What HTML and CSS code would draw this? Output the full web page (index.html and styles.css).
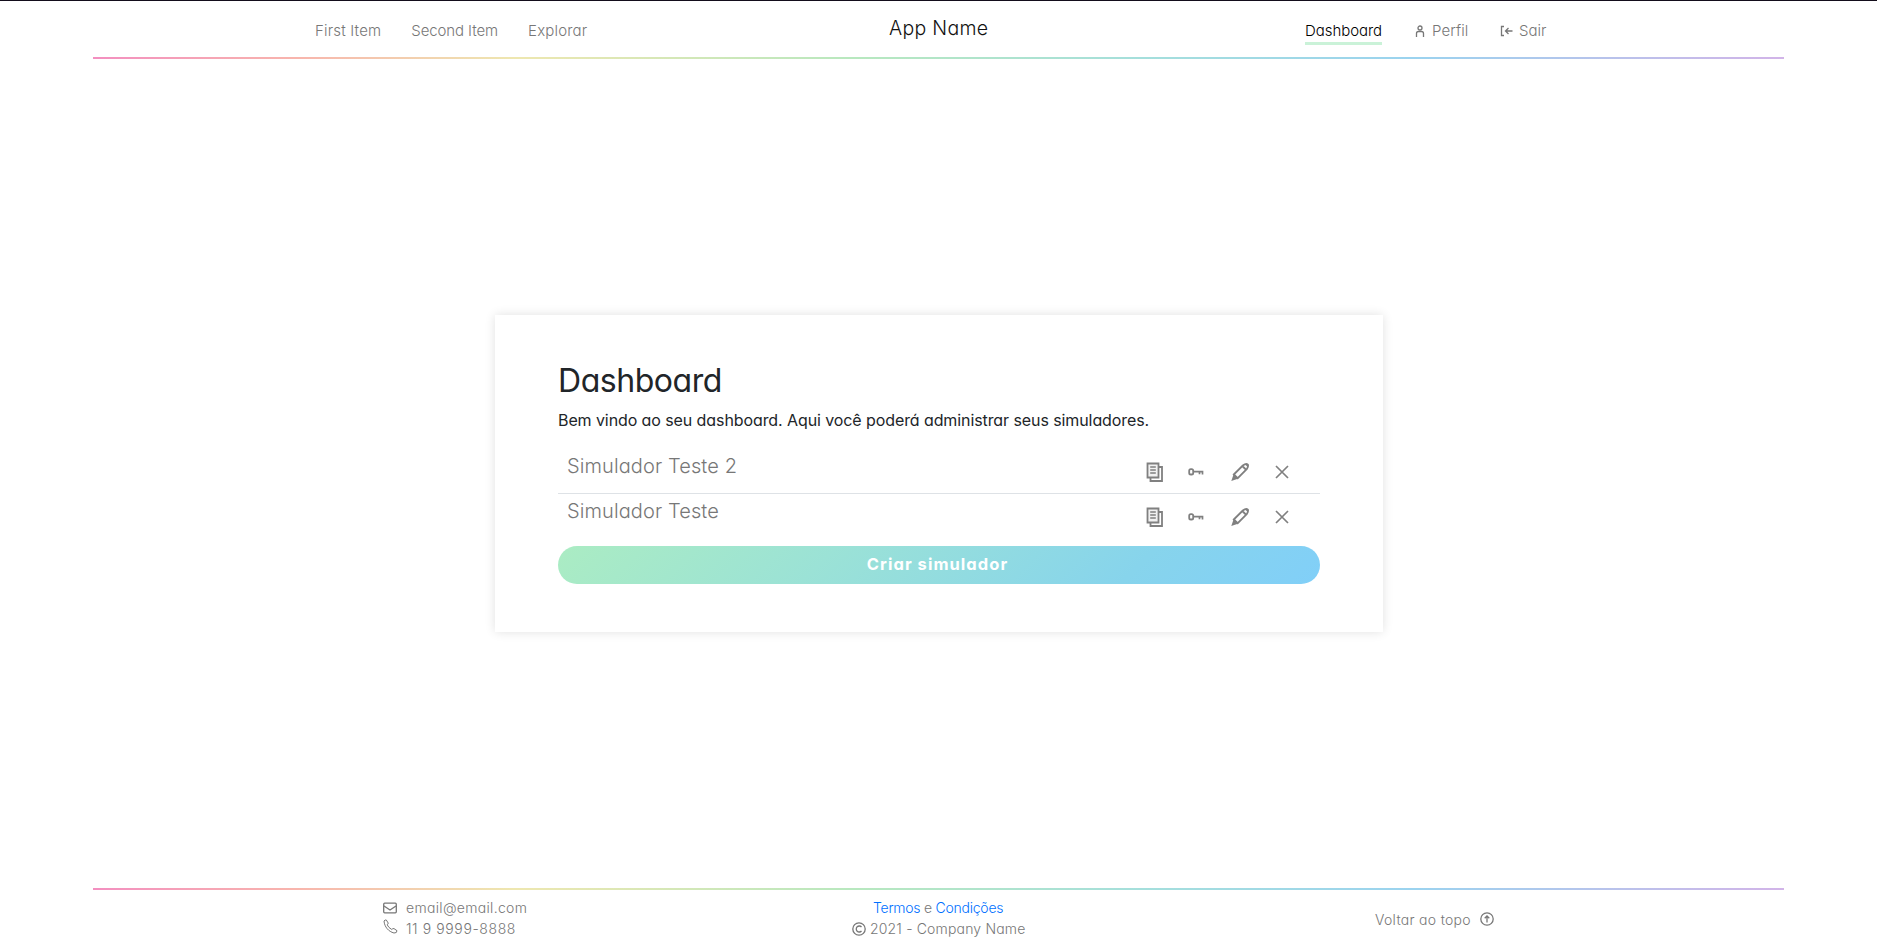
FILE: index.html
```html
<!DOCTYPE html>
<html lang="pt-BR">
<head>
<meta charset="utf-8">
<title>Dashboard</title>
<link rel="stylesheet" href="styles.css">
</head>
<body>
<svg class="sprite" aria-hidden="true">
  <symbol id="pages" viewBox="0 0 18 20"><path d="M4.500 16v3h11.500V5h-3" fill="none" stroke="currentColor" stroke-width="1.800"/><path d="M1.500 1.500h11v14h-11z" fill="#f1f1f1" stroke="currentColor" stroke-width="1.800"/><path d="M4.200 5h5.600M4.200 8h5.600M4.200 11h5.600" fill="none" stroke="currentColor" stroke-width="1.600"/></symbol>
  <symbol id="key" viewBox="0 0 16 8"><rect x="1.200" y="1.200" width="4" height="5.300" rx="1.600" fill="none" stroke="currentColor" stroke-width="1.800"/><path d="M5.200 3.700H14.500V6.500M11.500 3.700V6.200" fill="none" stroke="currentColor" stroke-width="1.700"/></symbol>
  <symbol id="pencil" viewBox="0 0 18 18"><path d="M2.800 11.500 11.800 2.500Q15 .2 16.700 1.500 17.800 3.200 15.700 6.200L6.700 15.200ZM11.300 3 15.300 7" fill="none" stroke="currentColor" stroke-width="1.800"/><path d="M2.600 11.300 6.900 15.700 .3 17.900ZM14 1.300 17.300 1 17 4.500Z" fill="currentColor" stroke="none"/></symbol>
  <symbol id="cross" viewBox="0 0 14 14"><path d="M1 1 13 13M13 1 1 13" fill="none" stroke="currentColor" stroke-width="1.700"/></symbol>
</svg>
<header class="header">
  <nav class="nav nav-left"><a>First Item</a><a class="second">Second Item</a><a>Explorar</a></nav>
  <div class="brand">App Name</div>
  <nav class="nav nav-right">
    <a class="active">Dashboard</a>
    <a class="profile"><svg width="10" height="12" viewBox="0 0 10 12"><circle cx="5" cy="3" r="2" /><path d="M1.500 12V8.500Q1.500 6.500 3.500 6.500H6.500Q8.500 6.500 8.500 8.500V12"/></svg>Perfil</a>
    <a class="logout"><svg width="13" height="12" viewBox="0 0 13 12"><path d="M4 1.500H1.500V10.500H4M12.500 6H5.500M8.500 3 5.500 6 8.500 9"/></svg>Sair</a>
  </nav>
</header>
<main class="main">
  <section class="card">
    <h1>Dashboard</h1>
    <p>Bem vindo ao seu dashboard. Aqui você poderá administrar seus simuladores.</p>
    <ul class="list">
      <li><span>Simulador Teste 2</span><div class="actions"><svg class="i-pages"><use href="#pages"/></svg><svg class="i-key"><use href="#key"/></svg><svg class="i-pencil"><use href="#pencil"/></svg><svg class="i-cross"><use href="#cross"/></svg></div></li>
      <li><span>Simulador Teste</span><div class="actions"><svg class="i-pages"><use href="#pages"/></svg><svg class="i-key"><use href="#key"/></svg><svg class="i-pencil"><use href="#pencil"/></svg><svg class="i-cross"><use href="#cross"/></svg></div></li>
    </ul>
    <button class="create">Criar simulador</button>
  </section>
</main>
<footer class="footer">
  <div class="contact">
    <div><svg width="14" height="12" viewBox="0 0 14 12"><rect x=".7" y="1.200" width="12.600" height="9.600" rx="1"/><path d="M1 4 7 8 13 4"/></svg><span class="email">email@email.com</span></div>
    <div><svg class="phone" width="15" height="15" viewBox="0 0 15 15"><path d="M1 2Q2 .6 3.300 1L5.200 4Q5.200 5.200 4.200 5.800 5.500 8.800 8.800 10.500 9.800 9.200 11 9.600L14 11.700Q14 14.200 11 14C5.500 12.500 1.500 8 1 2Z"/></svg><span class="tel">11 9 9999-8888</span></div>
  </div>
  <div class="legal">
    <div class="terms"><a>Termos</a> e <a>Condições</a></div>
    <div class="copy"><svg width="14" height="14" viewBox="0 0 14 14"><circle cx="7" cy="7" r="6.200"/><path d="M9.500 5A3 3 0 1 0 9.500 9"/></svg><span>2021 - Company Name</span></div>
  </div>
  <a class="top"><span>Voltar ao topo</span><svg width="14" height="14" viewBox="0 0 14 14"><circle cx="7" cy="7" r="6.200"/><path d="M7 10.500V4M4.700 6.200 7 4 9.300 6.200"/></svg></a>
</footer>
</body>
</html>
```
FILE: styles.css
```css
* { box-sizing: border-box; }
body { margin: 0; height: 950px; display: flex; flex-direction: column; border-top: 1px solid #130d1b; background: #fff; color: #212529; font-family: Inter, "Noto Sans", sans-serif; font-feature-settings: "cv11"; font-weight: 300; font-size: 15px; overflow: hidden; }
svg { flex: none; fill: none; stroke: currentColor; stroke-width: 1.3; }
.sprite { display: none; }
.header, .footer { width: 1691px; margin: 0 93px; color: #777; display: grid; border-image: linear-gradient(90deg, #f38fc0, #f8b5ad 12%, #eee7b0 25%, #b8e8bf 45%, #a5dfdc 62%, #9bd3ef 78%, #d2b4e8) 1; white-space: nowrap; }
.header { height: 58px; grid-template-columns: 796px 416px 1fr; border-style: solid; border-width: 0 0 2px; }
.nav { display: flex; align-items: flex-start; padding-top: 16px; line-height: 28px; font-size: 15px; letter-spacing: .1px; }
.nav a { display: flex; align-items: center; height: 28px; }
.nav-left { padding-left: 222px; gap: 30px; letter-spacing: .18px; }
.nav .second { letter-spacing: -.1px; }
.brand { color: #111; font-size: 19.500px; letter-spacing: .3px; line-height: 28px; padding-top: 13px; }
.nav .active { color: #000; border-bottom: 3px solid #caf2d8; width: 77px; align-items: flex-start; letter-spacing: -.05px; }
.profile { margin-left: 33px; gap: 7px; width: 53px; }
.logout { margin-left: 32px; gap: 6px; letter-spacing: 0; }
.main { flex: 1; padding: 256px 494px 0 495px; }
.card { height: 317px; padding: 44px 63px 0; box-shadow: 0 0 10px rgba(0,0,0,.12); }
h1 { margin: 0; font-size: 32px; font-weight: 380; line-height: 44px; letter-spacing: -.45px; }
p { margin: 4px 0 0; font-size: 16px; font-weight: 370; line-height: 26px; white-space: nowrap; letter-spacing: -.09px; }
.list { list-style: none; margin: 15px 0 0; padding: 0; color: #777; }
.list li { height: 45px; display: flex; justify-content: space-between; padding: 0 31px 0 9px; line-height: 37px; font-size: 20px; letter-spacing: .1px; }
.list li + li { border-top: 1px solid #dee2e6; line-height: 35px; }
.actions { display: flex; align-items: center; height: 47px; color: #808080; }
.list li + li .actions { height: 46px; }
.i-pages { width: 18px; height: 20px; margin-right: 24px; }
.i-key { width: 16px; height: 8px; margin-right: 27px; }
.i-pencil { width: 18px; height: 18px; margin-right: 26px; }
.i-cross { width: 14px; height: 14px; }
.create { display: block; width: 762px; height: 38px; margin-top: 8px; padding: 0 3px 2px 0; border: 0; border-radius: 19px; background: linear-gradient(135deg, #abecc3, #9be2d6 35%, #87d4ec 75%, #81cff8); color: #fff; font: 700 16.500px Inter, "Noto Sans", sans-serif; font-feature-settings: "cv11"; letter-spacing: 1.050px; }
.footer { height: 62px; grid-template-columns: 759px 523px 1fr; border-style: solid; border-width: 2px 0 0; font-size: 14px; }
.contact { padding: 7px 0 0 290px; }
.contact div { display: flex; align-items: center; gap: 9px; height: 21px; }
.email { letter-spacing: .32px; }
.tel { letter-spacing: .6px; }
.contact .phone { margin-bottom: 5px; margin-right: -1px; stroke-width: 1; }
.legal { padding-top: 7px; line-height: 21px; letter-spacing: .17px; }
.terms { padding-left: 21px; letter-spacing: -.25px; }
.terms a { color: #0070ff; font-weight: 350; }
.copy { display: flex; align-items: center; gap: 4px; }
.top { display: flex; align-items: center; gap: 9px; height: 58px; letter-spacing: .3px; }
```
